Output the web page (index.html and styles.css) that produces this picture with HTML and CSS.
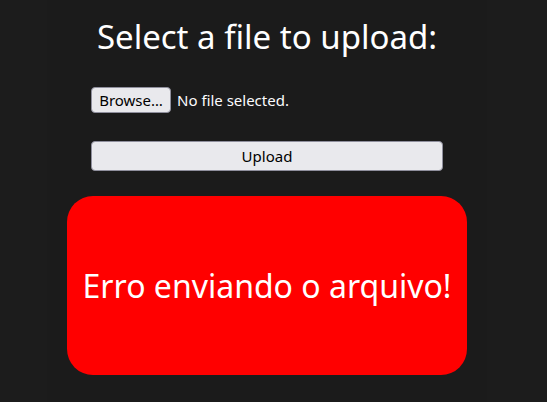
FILE: index.html
```html
<!DOCTYPE html>
<html lang="pt">
<head>
<meta charset="utf-8">
<title>Upload</title>
<link rel="stylesheet" href="styles.css">
</head>
<body>
<main class="column">
  <h1 class="title">Select a file to upload:</h1>
  <form class="form">
    <div class="file-row">
      <button type="button" class="btn browse">Browse…</button>
      <span class="file-label">No file selected.</span>
    </div>
    <button type="button" class="btn upload">Upload</button>
  </form>
  <div class="error">Erro enviando o arquivo!</div>
</main>
</body>
</html>
```
FILE: styles.css
```css
html, body {
  margin: 0;
  padding: 0;
  height: 100%;
}
body {
  background: #1c1c1c;
  font-family: "Noto Sans", "Open Sans", sans-serif;
  color: #ffffff;
}
.column {
  width: 440px;
  margin-left: 47px;
  min-height: 100%;
  background: #1b1b1b;
  display: flex;
  flex-direction: column;
  align-items: center;
  box-sizing: border-box;
  padding-top: 15px;
}
.title {
  margin: 0;
  font-size: 33px;
  font-weight: 400;
  line-height: 44px;
  color: #ffffff;
}
.form {
  width: 352px;
  margin-top: 28px;
  display: flex;
  flex-direction: column;
}
.file-row {
  display: flex;
  align-items: center;
  gap: 6px;
}
.btn {
  font-family: "Noto Sans", "Open Sans", sans-serif;
  font-size: 15px;
  color: #000;
  background: #e9e9ed;
  border: 1px solid #8f8f9d;
  border-radius: 4px;
  margin: 0;
}
.browse {
  height: 26px;
  width: 80px;
  padding: 0;
}
.file-label {
  font-size: 15px;
  color: #fbfbfe;
}
.upload {
  margin-top: 28px;
  height: 30px;
  width: 352px;
}
.error {
  margin-top: 25px;
  width: 400px;
  height: 179px;
  background: #ff0000;
  border-radius: 26px;
  display: flex;
  align-items: center;
  justify-content: center;
  font-size: 32px;
  color: #ffffff;
}
```
